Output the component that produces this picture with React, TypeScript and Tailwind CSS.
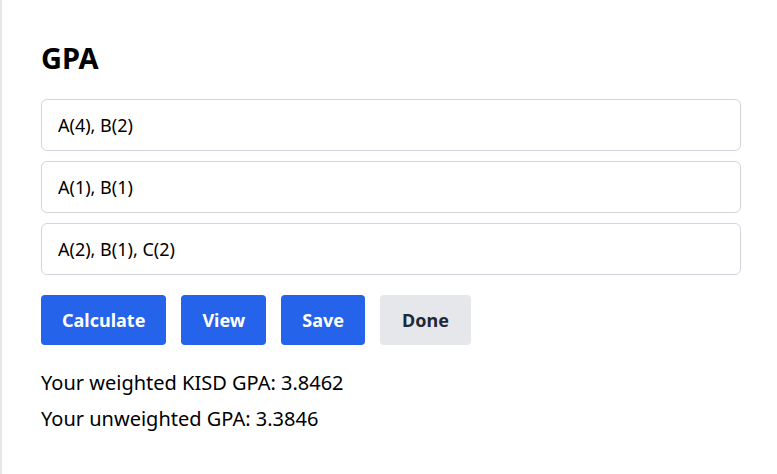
const courses = ["A(4), B(2)", "A(1), B(1)", "A(2), B(1), C(2)"];

export default function App() {
  return (
    <div
      className="min-h-screen bg-white border-l-2 border-gray-200 pl-[39px] pr-9 pt-10 text-black"
      style={{ fontFamily: '"Noto Sans", "Open Sans", sans-serif' }}
    >
      <h2 className="text-[29px] font-bold leading-9 mb-[23px]">GPA</h2>

      <div className="flex flex-col gap-2.5">
        {courses.map((c) => (
          <input
            key={c}
            type="text"
            defaultValue={c}
            className="h-[52px] w-full border border-gray-300 rounded-md px-4 text-lg text-black focus:outline-none"
          />
        ))}
      </div>

      <div className="flex gap-[15px] mt-5">
        <button className="h-[50px] px-[21px] rounded bg-[#2563eb] text-white text-lg font-bold">
          Calculate
        </button>
        <button className="h-[50px] px-[21px] rounded bg-[#2563eb] text-white text-lg font-bold">
          View
        </button>
        <button className="h-[50px] px-[21px] rounded bg-[#2563eb] text-white text-lg font-bold">
          Save
        </button>
        <button className="h-[50px] px-[22px] rounded bg-[#e5e7eb] text-[#1f2937] text-lg font-bold">
          Done
        </button>
      </div>

      <div className="mt-6 text-xl">
        <p className="leading-7 mb-2">Your weighted KISD GPA: 3.8462</p>
        <p className="leading-7">Your unweighted GPA: 3.3846</p>
      </div>
    </div>
  );
}
